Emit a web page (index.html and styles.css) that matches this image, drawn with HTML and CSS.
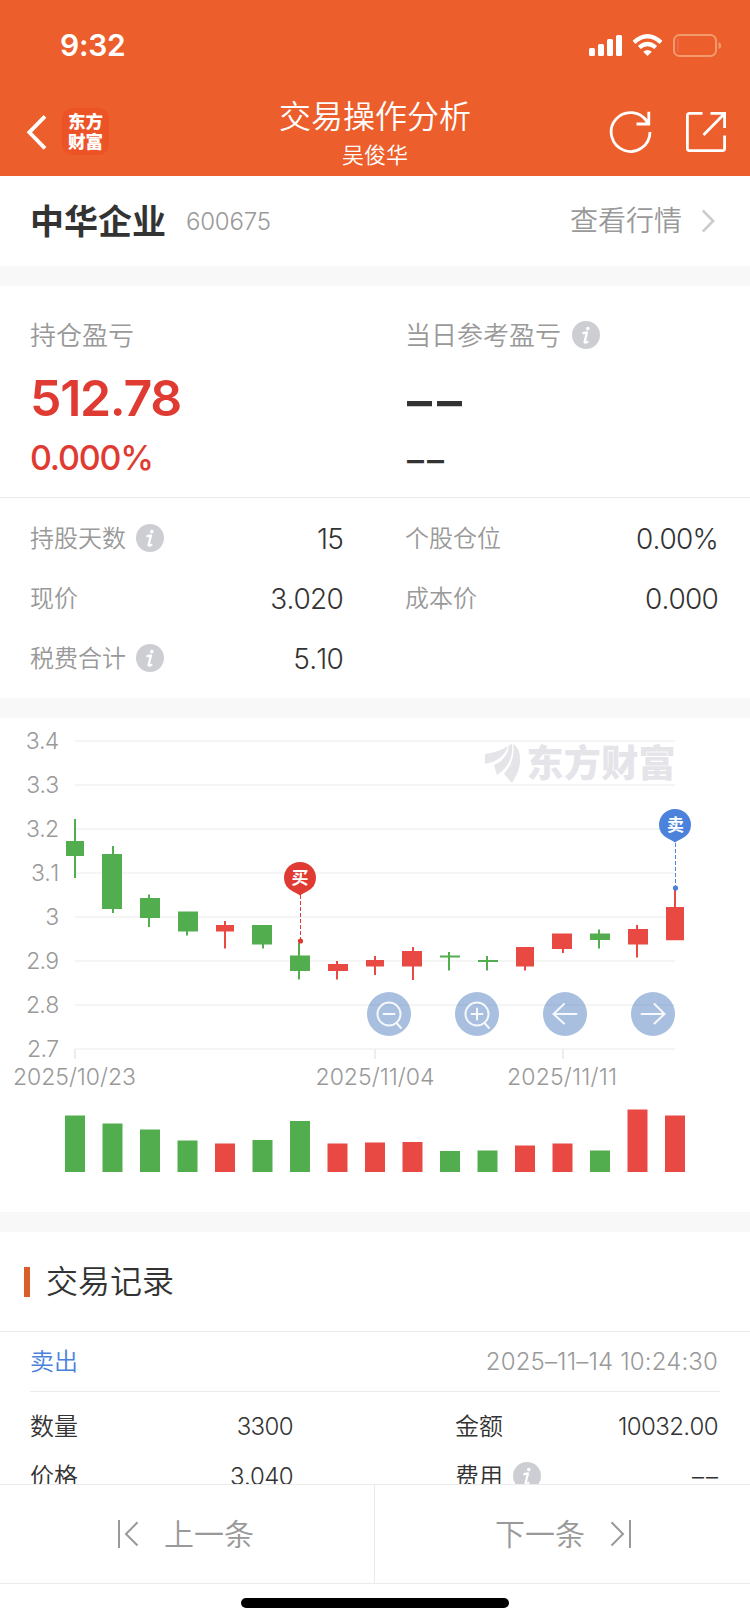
FILE: index.html
```html
<!DOCTYPE html>
<html lang="zh-CN">
<head>
<meta charset="utf-8">
<title>交易操作分析</title>
<link rel="stylesheet" href="styles.css">
</head>
<body>
<svg class="defs" width="0" height="0">
  <symbol id="info" viewBox="0 0 28 28">
    <circle cx="14" cy="14" r="14" fill="#cdced3"/>
    <circle cx="15.800" cy="7.600" r="1.800" fill="#fff"/>
    <path d="M11.400 12.200 L14.900 11.400 L12.600 21 Q12.600 22.200 15.400 21" fill="none" stroke="#fff" stroke-width="2.300" stroke-linejoin="round" stroke-linecap="round"/>
  </symbol>
</svg>
<div class="screen">
  <header class="header">
    <div class="status">
      <span class="time">9:32</span>
      <svg class="status-icons" width="136" height="26" viewBox="0 0 136 26">
        <g fill="#fff">
          <rect x="0" y="15" width="6" height="8" rx="1.5"/><rect x="9" y="11" width="6" height="12" rx="1.5"/><rect x="18" y="6" width="6" height="17" rx="1.5"/><rect x="27" y="2" width="6" height="21" rx="1.5"/>
          <path d="M58.500 23 L54.200 18.700 Q58.500 15.200 62.800 18.700Z"/>
        </g>
        <path d="M45 9.400 Q58.500 -2.800 72 9.400 M50.300 14.500 Q58.500 7.500 66.700 14.500" fill="none" stroke="#fff" stroke-width="4.200"/>
        <rect x="85" y="2" width="42" height="21" rx="5.500" fill="none" stroke="#f39a6d" stroke-width="2"/>
        <path d="M89 6v13" stroke="#f4695c" stroke-width="1.500"/>
        <path d="M129.500 9 Q132.300 10 132.300 12.500 T129.500 16Z" fill="#f39a6d"/>
      </svg>
    </div>
    <div class="nav">
      <div class="nav-side">
        <svg class="back" width="22" height="40" viewBox="0 0 22 40"><path d="M20 4.300 L4.300 20.300 L20 36.300" fill="none" stroke="#fff" stroke-width="3.800"/></svg>
        <div class="logo"><span>东方</span><span>财富</span></div>
      </div>
      <div class="nav-title"><h1>交易操作分析</h1><p>吴俊华</p></div>
      <div class="nav-side nav-actions">
        <svg width="44" height="44" viewBox="0 0 44 44" fill="none" stroke="#fff" stroke-width="2.800"><path d="M41 22 A19.400 19.400 0 1 1 38.500 12.500 M39.800 1.800 V14 H27.500" /></svg>
        <svg width="42" height="42" viewBox="0 0 42 42" fill="none" stroke="#fff" stroke-width="2.800"><path d="M16.500 2.400 H3.400 Q1.400 2.400 1.400 4.400 V37.600 Q1.400 39.600 3.400 39.600 H36.600 Q38.600 39.600 38.600 37.600 V24.500 M24.500 2.400 H38.600 V17 M38.600 2.400 L17.500 24"/></svg>
      </div>
    </div>
  </header>

  <section class="stock">
    <h2>中华企业</h2><span class="code">600675</span>
    <span class="quote">查看行情</span>
    <svg width="14" height="26" viewBox="0 0 14 26"><path d="M.8 2.500 L11.100 13 L.8 23.500" fill="none" stroke="#ccc" stroke-width="2.600"/></svg>
  </section>

  <section class="profit">
    <div class="profit-cell">
      <div class="label26">持仓盈亏</div>
      <div class="big red">512.78</div>
      <div class="mid red">0.000%</div>
    </div>
    <div class="profit-cell">
      <div class="label26">当日参考盈亏<svg class="info"><use href="#info"/></svg></div>
      <div class="big dash-big">––</div>
      <div class="mid dash-mid">––</div>
    </div>
  </section>

  <section class="facts">
    <div class="fact"><span class="label"><span class="zh">持股天数</span><svg class="info"><use href="#info"/></svg></span><b>15</b></div>
    <div class="fact"><span class="label"><span class="zh">个股仓位</span></span><b>0.00%</b></div>
    <div class="fact"><span class="label"><span class="zh">现价</span></span><b>3.020</b></div>
    <div class="fact"><span class="label"><span class="zh">成本价</span></span><b>0.000</b></div>
    <div class="fact"><span class="label"><span class="zh">税费合计</span><svg class="info"><use href="#info"/></svg></span><b>5.10</b></div>
  </section>

  <section class="chart">
    <svg width="750" height="494" viewBox="0 718 750 494">
      <path d="M75 741H675M75 785H675M75 829H675M75 873H675M75 917H675M75 961H675M75 1005H675M75 1049H675" stroke="#f5f5f5" stroke-width="2"/>
      <path d="M75 1049V1059M375 1049V1059M563 1049V1059" stroke="#ededed" stroke-width="2"/>
      <g class="axis axis-y" text-anchor="end">
        <text x="58.500" y="749">3.4</text><text x="58.500" y="793">3.3</text><text x="58.500" y="837">3.2</text><text x="58.500" y="881">3.1</text><text x="58.500" y="925">3</text><text x="58.500" y="969">2.9</text><text x="58.500" y="1013">2.8</text><text x="58.500" y="1057">2.7</text>
      </g>
      <g class="axis" text-anchor="middle">
        <text x="74.500" y="1085" textLength="123">2025/10/23</text><text x="375" y="1085" textLength="119">2025/11/04</text><text x="562" y="1085" textLength="110">2025/11/11</text>
      </g>
      <g class="watermark">
        <path d="M485 754 Q499 752 508 746 Q504 760 485 764Z"/>
        <path d="M494 765 Q508 759 509 745 L512 744 Q514 764 497 775Z"/>
        <path d="M504 774 Q516 760 513 744 Q521 748 520 763 Q519 772 512 783Z"/>
        <text x="526.500" y="777" textLength="149">东方财富</text>
      </g>
      <g fill="#52ad4e">
        <path d="M66 841h18v15h-18zM74 819h2v59h-2z"/>
        <path d="M102 854h20v55h-20zM112 846h2v67h-2z"/>
        <path d="M140 898h20v20h-20zM148 894.500h2v32.500h-2z"/>
        <path d="M178 911.500h20v20h-20zM186 911.500h2v24h-2z"/>
        <path d="M252 925h20v19.500h-20zM262 925h2v23.500h-2z"/>
        <path d="M290 955.500h20v15.500h-20zM298 943h2v36.500h-2z"/>
        <path d="M440 955.500h20v2h-20zM448 952h2v18.500h-2z"/>
        <path d="M478 960h20v2h-20zM486 956h2v14.500h-2z"/>
        <path d="M590 933.500h20v6.500h-20zM598 929.500h2v19h-2z"/>
      </g>
      <g fill="#e84943">
        <path d="M216 925h18v6.500h-18zM224 921h2v27.500h-2z"/>
        <path d="M328 964h20v7h-20zM336 961h2v18.500h-2z"/>
        <path d="M366 960h18v6.500h-18zM374 956h2v19h-2z"/>
        <path d="M402 951h20v15.500h-20zM412 947h2v33h-2z"/>
        <path d="M516 947h18v19.500h-18zM524 947h2v23.500h-2z"/>
        <path d="M552 933.500h20v15.500h-20zM562 933.500h2v19.500h-2z"/>
        <path d="M628 929h20v15.500h-20zM636 925h2v32.500h-2z"/>
        <path d="M666 907h18v33.300h-18zM674 888h2v52h-2z"/>
      </g>
      <path d="M300.500 895V941" stroke="#df3b32" stroke-width="1" stroke-dasharray="4 2"/>
      <circle cx="300.500" cy="941" r="2.600" fill="#df3b32"/>
      <path d="M300 862a16 15.500 0 0 1 16 16q0 9-9 13.500q-4 2-7 4q-3-2-7-4q-9-4.500-9-13.500a16 15.500 0 0 1 16-16z" fill="#df3b32"/>
      <text class="pin" x="300" y="883.500">买</text>
      <path d="M675.500 843V888" stroke="#4b82dc" stroke-width="1" stroke-dasharray="4 2"/>
      <circle cx="675.500" cy="888" r="2.600" fill="#4b82dc"/>
      <path d="M675 809a16 15.500 0 0 1 16 16q0 9-9 13.500q-4 2-7 4q-3-2-7-4q-9-4.500-9-13.500a16 15.500 0 0 1 16-16z" fill="#4b82dc"/>
      <text class="pin" x="675.500" y="830.500">卖</text>
      <g fill="#5580c2" opacity=".5"><circle cx="389" cy="1014" r="22"/><circle cx="477" cy="1014" r="22"/><circle cx="565" cy="1014" r="22"/><circle cx="653" cy="1014" r="22"/></g>
      <g fill="none" stroke="#f6f8fc" stroke-width="2" stroke-linecap="round">
        <circle cx="389" cy="1014" r="11.500"/><path d="M383.500 1014H394.500M396.500 1023L401 1028"/>
        <circle cx="477" cy="1014" r="11.500"/><path d="M471.500 1014H482.500M477 1008.500V1019.500M484.500 1023L489 1028"/>
        <path d="M576.500 1014H553.500M564 1004L553.500 1014L564 1023.500M641.500 1014H664.500M654.500 1004L664.500 1014L654.500 1023.500"/>
      </g>
      <g fill="#52ad4e">
        <path d="M65 1115.500h20V1172h-20zM102.500 1123.500h20V1172h-20zM140 1129.500h20V1172h-20zM177.500 1140.500h20V1172h-20zM252.500 1140h20V1172h-20zM290 1121h20V1172h-20zM440 1151h20V1172h-20zM477.500 1150.500h20V1172h-20zM590 1150.500h20V1172h-20z"/>
      </g>
      <g fill="#e84943">
        <path d="M215 1143.500h20V1172h-20zM327.500 1143.500h20V1172h-20zM365 1142.500h20V1172h-20zM402.500 1142h20V1172h-20zM515 1145.500h20V1172h-20zM552.500 1143.500h20V1172h-20zM627.500 1109.500h20V1172h-20zM665 1115.500h20V1172h-20z"/>
      </g>
    </svg>
  </section>

  <section class="records">
    <h3 class="records-title"><span class="zh">交易记录</span></h3>
    <div class="record-head"><span class="side zh">卖出</span><time>2025–11–14 10:24:30</time></div>
    <div class="record-grid">
      <div class="item"><span class="zh">数量</span><b>3300</b></div>
      <div class="item"><span class="zh">金额</span><b class="amount">10032.00</b></div>
      <div class="item"><span class="zh">价格</span><b>3.040</b></div>
      <div class="item"><span class="label-info"><span class="zh">费用</span><svg class="info"><use href="#info"/></svg></span><b class="dash-small">––</b></div>
    </div>
  </section>

  <nav class="pager">
    <div class="page prev">
      <svg width="22" height="28" viewBox="0 0 22 28" fill="none" stroke="#999" stroke-width="2"><path d="M2 0V28M20.500 2.300L9 14L20.500 25.500"/></svg><span class="zh">上一条</span>
    </div>
    <div class="page next">
      <span class="zh">下一条</span><svg width="22" height="28" viewBox="0 0 22 28" fill="none" stroke="#999" stroke-width="2"><path d="M20 0V28M1.500 2.300L13 14L1.500 25.500"/></svg>
    </div>
  </nav>
  <footer class="home"><i></i></footer>
</div>
</body>
</html>
```
FILE: styles.css
```css
* { box-sizing: border-box; }
body {
  margin: 0;
  background: #fff;
  color: #333;
  font-family: Inter, "Noto Sans CJK SC", sans-serif;
  font-weight: 350;
}
h1, h2, h3, p { margin: 0; font-weight: inherit; }
b { font-weight: 350; font-kerning: none; }
svg { flex: none; display: block; }
.defs { position: absolute; }
.zh { padding-bottom: 4px; font-family: "Noto Sans CJK SC", sans-serif; }
.screen { display: flex; flex-direction: column; width: 750px; height: 1624px; overflow: hidden; }

.header { flex: none; height: 176px; background: #ec5e2b; color: #fff; }
.status { display: flex; justify-content: space-between; height: 88px; padding: 33px 25px 0 60px; }
.time { font-size: 30px; line-height: 25px; font-weight: 600; letter-spacing: -.3px; }
.nav { display: flex; height: 88px; padding: 0 22px 0 25px; }
.nav-side { display: flex; flex: 1; align-items: center; }
.nav-actions { justify-content: flex-end; gap: 33px; }
.logo {
  display: flex; flex-direction: column; justify-content: center; align-items: center;
  width: 47px; height: 47px; margin: -1px 0 0 15px; border-radius: 10px; background: #ec5428;
  font-size: 17.500px; line-height: 20px; font-weight: 900;
}
.nav-title { display: flex; flex-direction: column; align-items: center; padding: 9px 0 0 0; margin-left: -3px; }
.nav-title h1 { font-size: 32px; line-height: 40px; }
.nav-title p { font-size: 22px; line-height: 34px; margin-top: 1px; }

.stock { display: flex; flex: none; align-items: center; height: 90px; padding: 0 34px 0 30px; }
.stock h2 { padding-bottom: 3px; font-size: 34px; font-weight: 600; }
.code { margin-left: 20px; font-size: 24px; color: #999; letter-spacing: -.2px; }
.quote { margin: 0 20px 0 auto; padding-bottom: 4px; font-size: 28px; color: #999; }

.profit { display: flex; flex: none; height: 232px; border-top: 20px solid #f8f8f8; border-bottom: 1px solid #ebebeb; }
.profit-cell { flex: 1; padding: 28px 0 0 30px; }
.label26 { display: flex; align-items: center; height: 38px; font-size: 26px; color: #999; }
.info { width: 28px; height: 28px; margin-left: 10px; }
.label26 .info { margin: 4px 0 0 11px; }
.big { height: 70px; margin-top: 11px; font-size: 50px; line-height: 70px; font-weight: 560; letter-spacing: -1.300px; }
.mid { height: 44px; margin-top: 3px; font-size: 34px; line-height: 44px; font-weight: 500; letter-spacing: -1.200px; }
.red { color: #df3b32; }
.dash-big { padding-left: 2px; line-height: 76px; letter-spacing: 5px; }
.dash-mid { padding-left: 2px; line-height: 48px; letter-spacing: 3px; }

.facts {
  display: grid; flex: none; grid-template-columns: 375px 375px; grid-auto-rows: 60px;
  height: 220px; padding-top: 10px; border-bottom: 20px solid #f8f8f8;
}
.fact { display: flex; align-items: center; justify-content: space-between; padding: 0 32px 0 30px; }
.label { display: flex; align-items: center; font-size: 24px; color: #999; }
.fact b { padding-top: 1px; font-size: 28px; letter-spacing: -.8px; }

.chart { flex: none; height: 514px; border-bottom: 20px solid #f8f8f8; }
.axis { font-size: 23px; fill: #999; font-kerning: none; }
.axis-y { letter-spacing: -.7px; }
.watermark { fill: #e5e4e9; font-size: 37px; font-weight: 900; }
.pin { font-size: 17px; font-weight: 600; fill: #fff; text-anchor: middle; }

.records { flex: none; height: 252px; overflow: hidden; }
.records-title { display: flex; align-items: center; height: 100px; padding-left: 24px; border-bottom: 1px solid #ebebeb; font-size: 32px; }
.records-title .zh { padding-bottom: 6px; }
.records-title::before { content: ""; width: 6px; height: 30px; margin-right: 16px; background: #d95e28; }
.record-head { display: flex; align-items: center; justify-content: space-between; height: 60px; margin: 0 30px; padding-right: 2px; border-bottom: 1px solid #ebebeb; font-size: 24px; }
.side { color: #4b82dc; }
.record-head time { color: #999; letter-spacing: .15px; }
.record-grid { display: grid; grid-template-columns: 263px 263px; justify-content: space-between; grid-auto-rows: 50px; padding: 9px 32px 0 30px; }
.item { display: flex; align-items: center; justify-content: space-between; font-size: 24px; }
.item b { letter-spacing: -.6px; }
.item .dash-small { letter-spacing: 2px; margin-right: -2px; }
.label-info { display: flex; align-items: center; }

.pager { display: flex; flex: none; height: 100px; border-top: 1px solid #ebebeb; border-bottom: 1px solid #ebebeb; background: #fff; }
.page { display: flex; flex: none; width: 375px; align-items: center; gap: 25px; font-size: 30px; color: #999; }
.page .zh { padding-bottom: 5px; }
.prev { padding-left: 117px; border-right: 1px solid #ebebeb; }
.next { padding-left: 120px; }
.home { display: flex; justify-content: center; padding-top: 14px; }
.home i { width: 268px; height: 10px; border-radius: 5px; background: #000; }
```
